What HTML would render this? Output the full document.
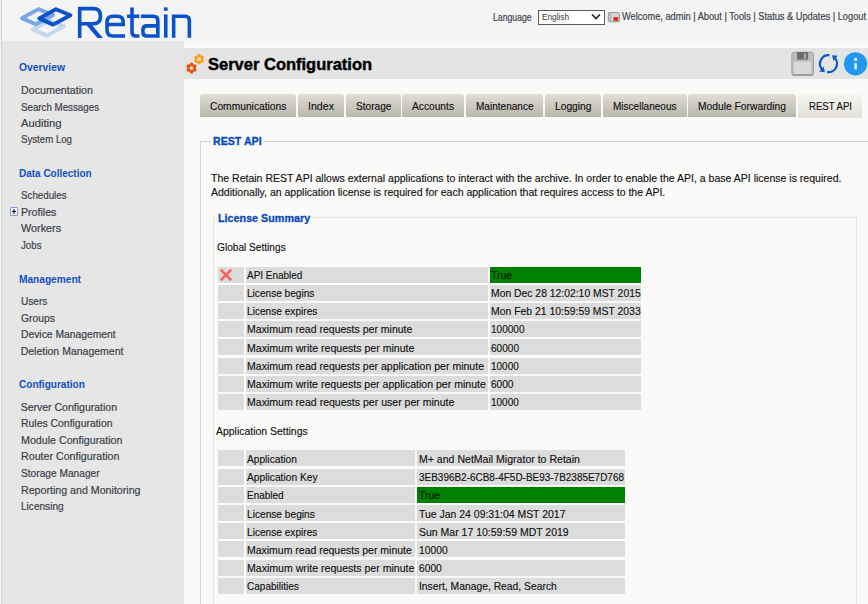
<!DOCTYPE html><html><head><meta charset="utf-8"><style>
html,body{margin:0;padding:0;width:868px;height:604px;overflow:hidden;background:#fafaf8}
.t{position:absolute;white-space:nowrap;font-family:"Liberation Sans", sans-serif;transform-origin:0 0}
</style></head><body>
<div style="position:absolute;left:0;top:0;width:868px;height:41px;background:#f4f4f4"></div>
<svg style="position:absolute;left:0;top:0" width="200" height="42" viewBox="0 0 200 42">
<g fill="none" stroke-linejoin="round" stroke-width="3.9">
<path d="M32.9 29.4 L49.7 20.5 L64.1 26.3 L46.9 35.6 Z" stroke="#c5d8f2"/>
<path d="M22 18.1 L38.5 9.1 L53 15 L35.7 24.3 Z" stroke="#7aa6e6"/>
<path d="M39.3 18.4 L55.9 9.3 L70.4 15.3 L53.1 24.6 Z" stroke="#0a52cc"/>
</g>
<g fill="none" stroke="#0a52cc" stroke-width="3.6" stroke-linecap="butt" stroke-linejoin="miter">
<path d="M79.7 37.9 V8.65 H93.4 Q100.4 8.65 100.4 15.65 V16.75 Q100.4 23.75 93.4 23.75 H79.7"/>
<path d="M107 24.45 H123.2 V22.3 Q123.2 16.3 117.2 16.3 H113 Q107 16.3 107 22.3 V30 Q107 36 113 36 H125.1"/>
<path d="M132 7.4 V32 Q132 36 136 36 H139.4 M127 16.3 H139.4"/>
<path d="M141 16.3 H153.35 Q157.85 16.3 157.85 20.8 V37.7 M157.85 25.85 H147 Q142.9 25.85 142.9 29.95 V31.9 Q142.9 36 147 36 H157.85"/>
<path d="M165.75 14.4 V37.7"/>
<path d="M173.65 37.7 V16.3 H184.85 Q189.35 16.3 189.35 20.8 V37.7"/>
</g>
<path d="M85.5 24 L91 24 L103 37.9 L97.5 37.9 Z" fill="#0a52cc"/>
<rect x="163.9" y="7.4" width="3.7" height="3.4" fill="#0a52cc"/>
</svg>
<div style="position:absolute;left:538px;top:10px;width:65px;height:13px;border:1px solid #5a5a5a;background:#fff"></div>
<svg style="position:absolute;left:590px;top:12.3px" width="12" height="9" viewBox="0 0 12 9"><path d="M2 2.5 L6 6.5 L10 2.5" fill="none" stroke="#222" stroke-width="1.6"/></svg>
<svg style="position:absolute;left:607px;top:11px" width="14" height="12" viewBox="0 0 14 12">
<path d="M2.5 1.5 H11 Q12.6 1.5 12.6 3 V9.5 Q12.6 10.8 11 10.8 H3 Q1.3 10.8 1.3 9.5 V3 Q1.3 1.5 2.5 1.5Z" fill="#d6d6d6" stroke="#8c8c8c" stroke-width="0.9"/>
<path d="M3 2 Q4 5 3 10" fill="none" stroke="#9a9a9a" stroke-width="1"/>
<path d="M6.5 6.2 H11.2 V9.8 H6.5Z" fill="#e8200e"/>
</svg>
<div style="position:absolute;left:0;top:0;width:1px;height:604px;background:#f2f2f2"></div>
<div style="position:absolute;left:1px;top:0;width:1px;height:604px;background:#d6d6d6"></div>
<div style="position:absolute;left:2px;top:41px;width:182px;height:563px;background:#e6e6e6"></div>
<div style="position:absolute;left:10px;top:207px;width:6px;height:7px;border:1px solid #7ba0d0;border-radius:1px;background:linear-gradient(#ffffff,#f4e8dc)"></div>
<div style="position:absolute;left:13px;top:209px;width:1.6px;height:5px;background:#808080"></div>
<div style="position:absolute;left:12px;top:211px;width:4px;height:1.4px;background:#000"></div>
<div style="position:absolute;left:184px;top:41px;width:684px;height:563px;background:#fafaf8"></div>
<div style="position:absolute;left:184px;top:48px;width:684px;height:31px;background:#e4e4e4"></div>
<svg style="position:absolute;left:0;top:0" width="220" height="90"><path d="M197.30 55.63 L197.90 54.04 L200.30 54.04 L200.90 55.63 L201.29 55.86 L202.97 55.58 L204.17 57.66 L203.09 58.97 L203.09 59.43 L204.17 60.74 L202.97 62.82 L201.29 62.54 L200.90 62.77 L200.30 64.36 L197.90 64.36 L197.30 62.77 L196.91 62.54 L195.23 62.82 L194.03 60.74 L195.11 59.43 L195.11 58.97 L194.03 57.66 L195.23 55.58 L196.91 55.86 Z M201.00 59.20 A1.9 1.9 0 1 0 197.20 59.20 A1.9 1.9 0 1 0 201.00 59.20 Z" fill="#ffa014" fill-rule="evenodd"/><path d="M189.65 64.33 L190.25 62.74 L192.75 62.74 L193.35 64.33 L193.84 64.61 L195.51 64.34 L196.76 66.50 L195.69 67.82 L195.69 68.38 L196.76 69.70 L195.51 71.86 L193.84 71.59 L193.35 71.87 L192.75 73.46 L190.25 73.46 L189.65 71.87 L189.16 71.59 L187.49 71.86 L186.24 69.70 L187.31 68.38 L187.31 67.82 L186.24 66.50 L187.49 64.34 L189.16 64.61 Z M193.40 68.10 A1.9 1.9 0 1 0 189.60 68.10 A1.9 1.9 0 1 0 193.40 68.10 Z" fill="#e8520c" fill-rule="evenodd"/></svg>
<svg style="position:absolute;left:790px;top:50px" width="78" height="28" viewBox="0 0 78 28">
<rect x="1.9" y="2.2" width="21.6" height="23.1" rx="2" fill="#bdbdbd" stroke="#a2a2a2" stroke-width="1"/>
<rect x="7" y="2" width="11.1" height="7.7" fill="#6e6e6e"/>
<rect x="13.9" y="3.3" width="2.1" height="5.8" fill="#a8a8a8"/>
<rect x="3.8" y="11.8" width="17.5" height="12.2" fill="#dadada"/>
<rect x="2.4" y="24" width="20.6" height="1.8" fill="#9c9c9c"/>
<g fill="none" stroke="#0a58cc" stroke-width="2.3">
<path d="M39.4 5.2 A8.5 8.5 0 0 0 32 19.16"/>
<path d="M37.17 22.1 A8.5 8.5 0 0 0 43.38 6.74"/>
</g>
<path d="M29.1 21.6 L33.7 16.5 L34.9 22.3Z" fill="#0a58cc"/>
<path d="M42.1 5.3 L47.6 5.8 L43.5 10.9Z" fill="#0a58cc"/>
<circle cx="65.5" cy="13.8" r="11.6" fill="#2196f3"/>
<circle cx="65.6" cy="9.4" r="1.6" fill="#fff"/>
<rect x="64.4" y="13.1" width="2.4" height="6.4" fill="#fff"/>
</svg>
<div style="position:absolute;left:200px;top:94px;width:96px;height:23px;border-radius:3px 3px 0 0;background:linear-gradient(#e0ded6,#b9b6aa)"></div>
<div style="position:absolute;left:298px;top:94px;width:46px;height:23px;border-radius:3px 3px 0 0;background:linear-gradient(#e0ded6,#b9b6aa)"></div>
<div style="position:absolute;left:346px;top:94px;width:55px;height:23px;border-radius:3px 3px 0 0;background:linear-gradient(#e0ded6,#b9b6aa)"></div>
<div style="position:absolute;left:402px;top:94px;width:62px;height:23px;border-radius:3px 3px 0 0;background:linear-gradient(#e0ded6,#b9b6aa)"></div>
<div style="position:absolute;left:466px;top:94px;width:77px;height:23px;border-radius:3px 3px 0 0;background:linear-gradient(#e0ded6,#b9b6aa)"></div>
<div style="position:absolute;left:545px;top:94px;width:56px;height:23px;border-radius:3px 3px 0 0;background:linear-gradient(#e0ded6,#b9b6aa)"></div>
<div style="position:absolute;left:603px;top:94px;width:84px;height:23px;border-radius:3px 3px 0 0;background:linear-gradient(#e0ded6,#b9b6aa)"></div>
<div style="position:absolute;left:688px;top:94px;width:108px;height:23px;border-radius:3px 3px 0 0;background:linear-gradient(#e0ded6,#b9b6aa)"></div>
<div style="position:absolute;left:798px;top:94px;width:64px;height:24px;border-radius:3px 3px 0 0;background:linear-gradient(#f6f6f2,#e2e0d8)"></div>
<div style="position:absolute;left:200px;top:141px;width:700px;height:600px;border:1px solid #d4d4d4;border-right:none;border-bottom:none"></div>
<div style="position:absolute;left:211px;top:134px;width:53px;height:14px;background:#fafaf8"></div>
<div style="position:absolute;left:213px;top:217px;width:642px;height:500px;border:1px solid #e4e4e4;border-bottom:none"></div>
<div style="position:absolute;left:216px;top:210px;width:97px;height:14px;background:#fafaf8"></div>
<div style="position:absolute;left:218px;top:267px;width:26px;height:16px;background:#dcdcdc"></div>
<div style="position:absolute;left:246px;top:267px;width:242px;height:16px;background:#dcdcdc"></div>
<div style="position:absolute;left:490px;top:267px;width:151px;height:16px;background:#008000"></div>
<div style="position:absolute;left:218px;top:285px;width:26px;height:16px;background:#dcdcdc"></div>
<div style="position:absolute;left:246px;top:285px;width:242px;height:16px;background:#dcdcdc"></div>
<div style="position:absolute;left:490px;top:285px;width:151px;height:16px;background:#dcdcdc"></div>
<div style="position:absolute;left:218px;top:303px;width:26px;height:16px;background:#dcdcdc"></div>
<div style="position:absolute;left:246px;top:303px;width:242px;height:16px;background:#dcdcdc"></div>
<div style="position:absolute;left:490px;top:303px;width:151px;height:16px;background:#dcdcdc"></div>
<div style="position:absolute;left:218px;top:321px;width:26px;height:16px;background:#dcdcdc"></div>
<div style="position:absolute;left:246px;top:321px;width:242px;height:16px;background:#dcdcdc"></div>
<div style="position:absolute;left:490px;top:321px;width:151px;height:16px;background:#dcdcdc"></div>
<div style="position:absolute;left:218px;top:339px;width:26px;height:16px;background:#dcdcdc"></div>
<div style="position:absolute;left:246px;top:339px;width:242px;height:16px;background:#dcdcdc"></div>
<div style="position:absolute;left:490px;top:339px;width:151px;height:16px;background:#dcdcdc"></div>
<div style="position:absolute;left:218px;top:358px;width:26px;height:16px;background:#dcdcdc"></div>
<div style="position:absolute;left:246px;top:358px;width:242px;height:16px;background:#dcdcdc"></div>
<div style="position:absolute;left:490px;top:358px;width:151px;height:16px;background:#dcdcdc"></div>
<div style="position:absolute;left:218px;top:376px;width:26px;height:16px;background:#dcdcdc"></div>
<div style="position:absolute;left:246px;top:376px;width:242px;height:16px;background:#dcdcdc"></div>
<div style="position:absolute;left:490px;top:376px;width:151px;height:16px;background:#dcdcdc"></div>
<div style="position:absolute;left:218px;top:394px;width:26px;height:16px;background:#dcdcdc"></div>
<div style="position:absolute;left:246px;top:394px;width:242px;height:16px;background:#dcdcdc"></div>
<div style="position:absolute;left:490px;top:394px;width:151px;height:16px;background:#dcdcdc"></div>
<svg style="position:absolute;left:219px;top:268px" width="14" height="14" viewBox="0 0 14 14"><path d="M1.8 1.8 L12.2 12.2 M12.2 1.8 L1.8 12.2" stroke="#f26666" stroke-width="2.7"/></svg>
<div style="position:absolute;left:218px;top:450px;width:26px;height:16px;background:#dcdcdc"></div>
<div style="position:absolute;left:246px;top:450px;width:169px;height:16px;background:#dcdcdc"></div>
<div style="position:absolute;left:417px;top:450px;width:208px;height:16px;background:#dcdcdc"></div>
<div style="position:absolute;left:218px;top:469px;width:26px;height:16px;background:#dcdcdc"></div>
<div style="position:absolute;left:246px;top:469px;width:169px;height:16px;background:#dcdcdc"></div>
<div style="position:absolute;left:417px;top:469px;width:208px;height:16px;background:#dcdcdc"></div>
<div style="position:absolute;left:218px;top:487px;width:26px;height:16px;background:#dcdcdc"></div>
<div style="position:absolute;left:246px;top:487px;width:169px;height:16px;background:#dcdcdc"></div>
<div style="position:absolute;left:417px;top:487px;width:208px;height:16px;background:#008000"></div>
<div style="position:absolute;left:218px;top:505px;width:26px;height:16px;background:#dcdcdc"></div>
<div style="position:absolute;left:246px;top:505px;width:169px;height:16px;background:#dcdcdc"></div>
<div style="position:absolute;left:417px;top:505px;width:208px;height:16px;background:#dcdcdc"></div>
<div style="position:absolute;left:218px;top:523px;width:26px;height:16px;background:#dcdcdc"></div>
<div style="position:absolute;left:246px;top:523px;width:169px;height:16px;background:#dcdcdc"></div>
<div style="position:absolute;left:417px;top:523px;width:208px;height:16px;background:#dcdcdc"></div>
<div style="position:absolute;left:218px;top:541px;width:26px;height:16px;background:#dcdcdc"></div>
<div style="position:absolute;left:246px;top:541px;width:169px;height:16px;background:#dcdcdc"></div>
<div style="position:absolute;left:417px;top:541px;width:208px;height:16px;background:#dcdcdc"></div>
<div style="position:absolute;left:218px;top:560px;width:26px;height:16px;background:#dcdcdc"></div>
<div style="position:absolute;left:246px;top:560px;width:169px;height:16px;background:#dcdcdc"></div>
<div style="position:absolute;left:417px;top:560px;width:208px;height:16px;background:#dcdcdc"></div>
<div style="position:absolute;left:218px;top:578px;width:26px;height:16px;background:#dcdcdc"></div>
<div style="position:absolute;left:246px;top:578px;width:169px;height:16px;background:#dcdcdc"></div>
<div style="position:absolute;left:417px;top:578px;width:208px;height:16px;background:#dcdcdc"></div>
<div class="t" style="left:492.8px;top:12px;font-size:10.5px;line-height:10.5px;font-weight:normal;color:#40444e;transform:scaleX(0.8284);-webkit-text-stroke:0.2px #3c3f47;">Language</div>
<div class="t" style="left:541.5px;top:12px;font-size:9.5px;line-height:9.5px;font-weight:normal;color:#333;transform:scaleX(0.8662);">English</div>
<div class="t" style="left:621.9px;top:11px;font-size:10.5px;line-height:10.5px;font-weight:normal;color:#40444e;transform:scaleX(0.8800);-webkit-text-stroke:0.2px #3c3f47;">Welcome, admin | About | Tools | Status &amp; Updates | Logout</div>
<div class="t" style="left:19.0px;top:62px;font-size:10.5px;line-height:10.5px;font-weight:bold;color:#1150c2;transform:scaleX(0.9849);">Overview</div>
<div class="t" style="left:20.7px;top:85px;font-size:10.5px;line-height:10.5px;font-weight:normal;color:#3c3f47;transform:scaleX(1.0195);-webkit-text-stroke:0.2px #3c3f47;">Documentation</div>
<div class="t" style="left:20.7px;top:102px;font-size:10.5px;line-height:10.5px;font-weight:normal;color:#3c3f47;transform:scaleX(0.9281);-webkit-text-stroke:0.2px #3c3f47;">Search Messages</div>
<div class="t" style="left:20.7px;top:118px;font-size:10.5px;line-height:10.5px;font-weight:normal;color:#3c3f47;transform:scaleX(1.0671);-webkit-text-stroke:0.2px #3c3f47;">Auditing</div>
<div class="t" style="left:20.7px;top:134px;font-size:10.5px;line-height:10.5px;font-weight:normal;color:#3c3f47;transform:scaleX(0.9197);-webkit-text-stroke:0.2px #3c3f47;">System Log</div>
<div class="t" style="left:19.2px;top:168px;font-size:10.5px;line-height:10.5px;font-weight:bold;color:#1150c2;transform:scaleX(0.9498);">Data Collection</div>
<div class="t" style="left:20.7px;top:190px;font-size:10.5px;line-height:10.5px;font-weight:normal;color:#3c3f47;transform:scaleX(0.9297);-webkit-text-stroke:0.2px #3c3f47;">Schedules</div>
<div class="t" style="left:20.7px;top:207px;font-size:10.5px;line-height:10.5px;font-weight:normal;color:#3c3f47;transform:scaleX(1.0110);-webkit-text-stroke:0.2px #3c3f47;">Profiles</div>
<div class="t" style="left:20.7px;top:223px;font-size:10.5px;line-height:10.5px;font-weight:normal;color:#3c3f47;transform:scaleX(1.0307);-webkit-text-stroke:0.2px #3c3f47;">Workers</div>
<div class="t" style="left:20.7px;top:240px;font-size:10.5px;line-height:10.5px;font-weight:normal;color:#3c3f47;transform:scaleX(0.9239);-webkit-text-stroke:0.2px #3c3f47;">Jobs</div>
<div class="t" style="left:19.2px;top:274px;font-size:10.5px;line-height:10.5px;font-weight:bold;color:#1150c2;transform:scaleX(0.9659);">Management</div>
<div class="t" style="left:20.7px;top:296px;font-size:10.5px;line-height:10.5px;font-weight:normal;color:#3c3f47;transform:scaleX(0.9627);-webkit-text-stroke:0.2px #3c3f47;">Users</div>
<div class="t" style="left:20.7px;top:313px;font-size:10.5px;line-height:10.5px;font-weight:normal;color:#3c3f47;transform:scaleX(0.9815);-webkit-text-stroke:0.2px #3c3f47;">Groups</div>
<div class="t" style="left:20.7px;top:329px;font-size:10.5px;line-height:10.5px;font-weight:normal;color:#3c3f47;transform:scaleX(0.9833);-webkit-text-stroke:0.2px #3c3f47;">Device Management</div>
<div class="t" style="left:20.7px;top:346px;font-size:10.5px;line-height:10.5px;font-weight:normal;color:#3c3f47;-webkit-text-stroke:0.2px #3c3f47;">Deletion Management</div>
<div class="t" style="left:18.6px;top:379px;font-size:10.5px;line-height:10.5px;font-weight:bold;color:#1150c2;transform:scaleX(0.9560);">Configuration</div>
<div class="t" style="left:20.7px;top:402px;font-size:10.5px;line-height:10.5px;font-weight:normal;color:#3c3f47;-webkit-text-stroke:0.2px #3c3f47;">Server Configuration</div>
<div class="t" style="left:20.7px;top:418px;font-size:10.5px;line-height:10.5px;font-weight:normal;color:#3c3f47;transform:scaleX(0.9922);-webkit-text-stroke:0.2px #3c3f47;">Rules Configuration</div>
<div class="t" style="left:20.7px;top:435px;font-size:10.5px;line-height:10.5px;font-weight:normal;color:#3c3f47;transform:scaleX(1.0159);-webkit-text-stroke:0.2px #3c3f47;">Module Configuration</div>
<div class="t" style="left:20.7px;top:451px;font-size:10.5px;line-height:10.5px;font-weight:normal;color:#3c3f47;transform:scaleX(1.0156);-webkit-text-stroke:0.2px #3c3f47;">Router Configuration</div>
<div class="t" style="left:20.7px;top:468px;font-size:10.5px;line-height:10.5px;font-weight:normal;color:#3c3f47;transform:scaleX(0.9687);-webkit-text-stroke:0.2px #3c3f47;">Storage Manager</div>
<div class="t" style="left:20.7px;top:485px;font-size:10.5px;line-height:10.5px;font-weight:normal;color:#3c3f47;transform:scaleX(1.0135);-webkit-text-stroke:0.2px #3c3f47;">Reporting and Monitoring</div>
<div class="t" style="left:20.7px;top:501px;font-size:10.5px;line-height:10.5px;font-weight:normal;color:#3c3f47;transform:scaleX(0.9600);-webkit-text-stroke:0.2px #3c3f47;">Licensing</div>
<div class="t" style="left:208.0px;top:56px;font-size:16.5px;line-height:16.5px;font-weight:bold;color:#000;-webkit-text-stroke:0.45px #000;">Server Configuration</div>
<div class="t" style="left:209.8px;top:101px;font-size:11.5px;line-height:11.5px;font-weight:normal;color:#111;transform:scaleX(0.8919);-webkit-text-stroke:0.15px #111;">Communications</div>
<div class="t" style="left:308.0px;top:101px;font-size:11.5px;line-height:11.5px;font-weight:normal;color:#111;transform:scaleX(0.9239);-webkit-text-stroke:0.15px #111;">Index</div>
<div class="t" style="left:355.8px;top:101px;font-size:11.5px;line-height:11.5px;font-weight:normal;color:#111;transform:scaleX(0.8813);-webkit-text-stroke:0.15px #111;">Storage</div>
<div class="t" style="left:412.0px;top:101px;font-size:11.5px;line-height:11.5px;font-weight:normal;color:#111;transform:scaleX(0.8877);-webkit-text-stroke:0.15px #111;">Accounts</div>
<div class="t" style="left:475.8px;top:101px;font-size:11.5px;line-height:11.5px;font-weight:normal;color:#111;transform:scaleX(0.8731);-webkit-text-stroke:0.15px #111;">Maintenance</div>
<div class="t" style="left:554.8px;top:101px;font-size:11.5px;line-height:11.5px;font-weight:normal;color:#111;transform:scaleX(0.8916);-webkit-text-stroke:0.15px #111;">Logging</div>
<div class="t" style="left:613.2px;top:101px;font-size:11.5px;line-height:11.5px;font-weight:normal;color:#111;transform:scaleX(0.8714);-webkit-text-stroke:0.15px #111;">Miscellaneous</div>
<div class="t" style="left:698.0px;top:101px;font-size:11.5px;line-height:11.5px;font-weight:normal;color:#111;transform:scaleX(0.8940);-webkit-text-stroke:0.15px #111;">Module Forwarding</div>
<div class="t" style="left:808.5px;top:101px;font-size:11.5px;line-height:11.5px;font-weight:normal;color:#111;transform:scaleX(0.8339);-webkit-text-stroke:0.15px #111;">REST API</div>
<div class="t" style="left:213.4px;top:136px;font-size:11px;line-height:11px;font-weight:bold;color:#0a48b8;transform:scaleX(0.9657);-webkit-text-stroke:0.3px #0a48b8;">REST API</div>
<div class="t" style="left:211.3px;top:173px;font-size:11.5px;line-height:11.5px;font-weight:normal;color:#111;transform:scaleX(0.9151);-webkit-text-stroke:0.15px #111;">The Retain REST API allows external applications to interact with the archive. In order to enable the API, a base API license is required.</div>
<div class="t" style="left:211.3px;top:187px;font-size:11.5px;line-height:11.5px;font-weight:normal;color:#111;transform:scaleX(0.9150);-webkit-text-stroke:0.15px #111;">Additionally, an application license is required for each application that requires access to the API.</div>
<div class="t" style="left:218.0px;top:213px;font-size:11.5px;line-height:11.5px;font-weight:bold;color:#0a48b8;transform:scaleX(0.9366);-webkit-text-stroke:0.3px #0a48b8;">License Summary</div>
<div class="t" style="left:217.0px;top:242px;font-size:11.5px;line-height:11.5px;font-weight:normal;color:#111;transform:scaleX(0.8808);-webkit-text-stroke:0.15px #111;">Global Settings</div>
<div class="t" style="left:247.3px;top:270px;font-size:11.5px;line-height:11.5px;font-weight:normal;color:#111;transform:scaleX(0.8665);-webkit-text-stroke:0.15px #111;">API Enabled</div>
<div class="t" style="left:490.8px;top:270px;font-size:11.5px;line-height:11.5px;font-weight:normal;color:#031a03;transform:scaleX(0.9124);-webkit-text-stroke:0.15px #111;">True</div>
<div class="t" style="left:247.3px;top:288px;font-size:11.5px;line-height:11.5px;font-weight:normal;color:#111;transform:scaleX(0.8784);-webkit-text-stroke:0.15px #111;">License begins</div>
<div class="t" style="left:490.8px;top:288px;font-size:11.5px;line-height:11.5px;font-weight:normal;color:#111;transform:scaleX(0.9017);-webkit-text-stroke:0.15px #111;">Mon Dec 28 12:02:10 MST 2015</div>
<div class="t" style="left:247.3px;top:306px;font-size:11.5px;line-height:11.5px;font-weight:normal;color:#111;transform:scaleX(0.8810);-webkit-text-stroke:0.15px #111;">License expires</div>
<div class="t" style="left:490.8px;top:306px;font-size:11.5px;line-height:11.5px;font-weight:normal;color:#111;transform:scaleX(0.9052);-webkit-text-stroke:0.15px #111;">Mon Feb 21 10:59:59 MST 2033</div>
<div class="t" style="left:247.3px;top:324px;font-size:11.5px;line-height:11.5px;font-weight:normal;color:#111;transform:scaleX(0.9144);-webkit-text-stroke:0.15px #111;">Maximum read requests per minute</div>
<div class="t" style="left:490.8px;top:324px;font-size:11.5px;line-height:11.5px;font-weight:normal;color:#111;transform:scaleX(0.8730);-webkit-text-stroke:0.15px #111;">100000</div>
<div class="t" style="left:247.3px;top:343px;font-size:11.5px;line-height:11.5px;font-weight:normal;color:#111;transform:scaleX(0.9190);-webkit-text-stroke:0.15px #111;">Maximum write requests per minute</div>
<div class="t" style="left:490.8px;top:343px;font-size:11.5px;line-height:11.5px;font-weight:normal;color:#111;transform:scaleX(0.8754);-webkit-text-stroke:0.15px #111;">60000</div>
<div class="t" style="left:247.3px;top:361px;font-size:11.5px;line-height:11.5px;font-weight:normal;color:#111;transform:scaleX(0.9155);-webkit-text-stroke:0.15px #111;">Maximum read requests per application per minute</div>
<div class="t" style="left:490.8px;top:361px;font-size:11.5px;line-height:11.5px;font-weight:normal;color:#111;transform:scaleX(0.8692);-webkit-text-stroke:0.15px #111;">10000</div>
<div class="t" style="left:247.3px;top:379px;font-size:11.5px;line-height:11.5px;font-weight:normal;color:#111;transform:scaleX(0.9183);-webkit-text-stroke:0.15px #111;">Maximum write requests per application per minute</div>
<div class="t" style="left:490.8px;top:379px;font-size:11.5px;line-height:11.5px;font-weight:normal;color:#111;transform:scaleX(0.8791);-webkit-text-stroke:0.15px #111;">6000</div>
<div class="t" style="left:247.3px;top:397px;font-size:11.5px;line-height:11.5px;font-weight:normal;color:#111;transform:scaleX(0.9166);-webkit-text-stroke:0.15px #111;">Maximum read requests per user per minute</div>
<div class="t" style="left:490.8px;top:397px;font-size:11.5px;line-height:11.5px;font-weight:normal;color:#111;transform:scaleX(0.8692);-webkit-text-stroke:0.15px #111;">10000</div>
<div class="t" style="left:216.3px;top:426px;font-size:11.5px;line-height:11.5px;font-weight:normal;color:#111;transform:scaleX(0.9078);-webkit-text-stroke:0.15px #111;">Application Settings</div>
<div class="t" style="left:247.3px;top:454px;font-size:11.5px;line-height:11.5px;font-weight:normal;color:#111;transform:scaleX(0.8851);-webkit-text-stroke:0.15px #111;">Application</div>
<div class="t" style="left:418.8px;top:454px;font-size:11.5px;line-height:11.5px;font-weight:normal;color:#111;transform:scaleX(0.9171);-webkit-text-stroke:0.15px #111;">M+ and NetMail Migrator to Retain</div>
<div class="t" style="left:247.3px;top:472px;font-size:11.5px;line-height:11.5px;font-weight:normal;color:#111;transform:scaleX(0.8905);-webkit-text-stroke:0.15px #111;">Application Key</div>
<div class="t" style="left:418.8px;top:472px;font-size:11.5px;line-height:11.5px;font-weight:normal;color:#111;transform:scaleX(0.8666);-webkit-text-stroke:0.15px #111;">3EB396B2-6CB8-4F5D-BE93-7B2385E7D768</div>
<div class="t" style="left:247.3px;top:490px;font-size:11.5px;line-height:11.5px;font-weight:normal;color:#111;transform:scaleX(0.8645);-webkit-text-stroke:0.15px #111;">Enabled</div>
<div class="t" style="left:418.8px;top:490px;font-size:11.5px;line-height:11.5px;font-weight:normal;color:#031a03;transform:scaleX(0.9124);-webkit-text-stroke:0.15px #111;">True</div>
<div class="t" style="left:247.3px;top:509px;font-size:11.5px;line-height:11.5px;font-weight:normal;color:#111;transform:scaleX(0.8836);-webkit-text-stroke:0.15px #111;">License begins</div>
<div class="t" style="left:418.8px;top:509px;font-size:11.5px;line-height:11.5px;font-weight:normal;color:#111;transform:scaleX(0.9092);-webkit-text-stroke:0.15px #111;">Tue Jan 24 09:31:04 MST 2017</div>
<div class="t" style="left:247.3px;top:527px;font-size:11.5px;line-height:11.5px;font-weight:normal;color:#111;transform:scaleX(0.8810);-webkit-text-stroke:0.15px #111;">License expires</div>
<div class="t" style="left:418.8px;top:527px;font-size:11.5px;line-height:11.5px;font-weight:normal;color:#111;transform:scaleX(0.9123);-webkit-text-stroke:0.15px #111;">Sun Mar 17 10:59:59 MDT 2019</div>
<div class="t" style="left:247.3px;top:545px;font-size:11.5px;line-height:11.5px;font-weight:normal;color:#111;transform:scaleX(0.9110);-webkit-text-stroke:0.15px #111;">Maximum read requests per minute</div>
<div class="t" style="left:418.8px;top:545px;font-size:11.5px;line-height:11.5px;font-weight:normal;color:#111;transform:scaleX(0.8942);-webkit-text-stroke:0.15px #111;">10000</div>
<div class="t" style="left:247.3px;top:563px;font-size:11.5px;line-height:11.5px;font-weight:normal;color:#111;transform:scaleX(0.9190);-webkit-text-stroke:0.15px #111;">Maximum write requests per minute</div>
<div class="t" style="left:418.8px;top:563px;font-size:11.5px;line-height:11.5px;font-weight:normal;color:#111;transform:scaleX(0.8908);-webkit-text-stroke:0.15px #111;">6000</div>
<div class="t" style="left:247.3px;top:581px;font-size:11.5px;line-height:11.5px;font-weight:normal;color:#111;transform:scaleX(0.8713);-webkit-text-stroke:0.15px #111;">Capabilities</div>
<div class="t" style="left:418.8px;top:581px;font-size:11.5px;line-height:11.5px;font-weight:normal;color:#111;transform:scaleX(0.8982);-webkit-text-stroke:0.15px #111;">Insert, Manage, Read, Search</div>
</body></html>
